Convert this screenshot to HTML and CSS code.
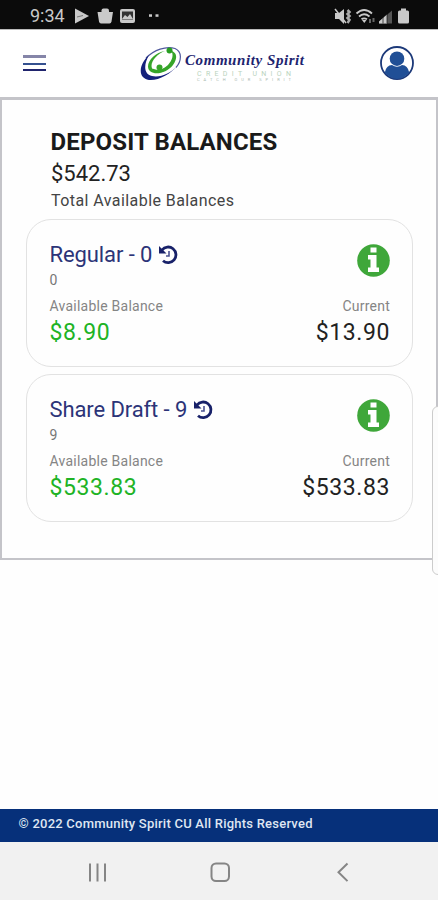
FILE: index.html
```html
<!DOCTYPE html>
<html lang="en">
<head>
<meta charset="utf-8">
<meta name="viewport" content="width=device-width, initial-scale=1">
<title>Deposit Balances</title>
<link rel="stylesheet" href="styles.css">
</head>
<body>
<div class="status">
  <span class="time">9:34</span>
  <svg class="status-left" width="90" height="20" viewBox="0 0 90 20" fill="#c9c9c9">
    <path d="M1 2.500L15 10 1 17.500z"/><path d="M3 11l6-1.500" stroke="#777" fill="none"/>
    <path d="M23.500 6h15.500l-1.500 9.500q-.4 2-2 2h-8.500q-1.600 0-2-2z"/><path d="M27.500 8V4.500Q27.500 2.500 29.500 2.500h3.500q2 0 2 2V8z"/>
    <rect x="46" y="3" width="15" height="14" rx="2"/><path d="M48 5.500h11v8H48z" fill="#333"/><path d="M48 13l3-4 2.500 2L56 8l3 5z"/>
    <rect x="75" y="8.300" width="3" height="2.500"/><rect x="81.500" y="8.300" width="3" height="2.500"/>
  </svg>
  <svg class="status-right" width="76" height="20" viewBox="0 0 76 20" fill="#c9c9c9">
    <path d="M1 7h4l5-4v15l-5-5H1z"/><path d="M1 3l11 14" stroke="#c9c9c9" stroke-width="1.500"/><path d="M13.500 4l2 2-2 2 2 2-2 2 2 2-2 3" stroke="#aaa" stroke-width="2.500" fill="none"/>
    <g fill="none" stroke="#c9c9c9" stroke-width="1.800"><path d="M22.500 7.500q7.500-7 15.500 0"/><path d="M25 10.500q5-4.500 10.500 0"/><path d="M27.500 13.300q2.500-2 5.500 0"/></g><path d="M28 14h4.500L30.300 17z"/><path d="M35 13h2v4h-2zM38.500 12h2v4h-2z" fill="#666"/>
    <path d="M45 17.500v-2l13-11v13z" fill="#555"/><path d="M45 17.500v-2l8-7v9z"/><path d="M49 11v6.500M53 8v9.500" stroke="#0b0b0b" stroke-width=".7"/>
    <path d="M64 6q0-1.500 1.500-1.500H67V2.500h5v2h1.500Q75 4.500 75 6v10q0 1.500-1.500 1.500h-8Q64 17.500 64 16z"/>
  </svg>
</div>
<header class="header">
  <div class="menu"><i></i><i></i><i></i></div>
  <svg class="logo" width="168" height="38" viewBox="0 0 168 38">
    <path d="M9 9C-1 18-3 32 9 34c9 1 22-6 28-14C31 27 20 32 12 30 3 28 4 18 9 9z" fill="#15217c"/>
    <path d="M6 12C14 4 26-.5 35 2.500c7 3 7 12 1 19" fill="none" stroke="#15217c" stroke-width="1.200" stroke-opacity=".75"/>
    <path d="M25 5C16 6 8 14 8 20.500c0 9.500 17 9 25-1.500 5-7 4-12.500-2-14.500 3 4 1.500 9.500-3 14.500-7 7-16.500 7-16.500 1 0-6 6.500-12.500 13.500-15z" fill="#36a529"/>
    <circle cx="29.500" cy="4.500" r="3" fill="#279d21"/><circle cx="19.500" cy="21.500" r="3" fill="#36a529"/>
    <path d="M12.500 24q7 3 14-1.500" fill="none" stroke="#36a529" stroke-width="2.500"/>
    <text class="brand" x="45" y="19" textLength="119" lengthAdjust="spacing">Community Spirit</text>
    <text class="union" x="57" y="29.500" textLength="94">CREDIT UNION</text>
    <text class="tagline" x="57" y="34.500" textLength="94">CATCH OUR SPIRIT</text>
  </svg>
  <svg class="profile" width="36" height="36" viewBox="0 0 36 36">
    <circle cx="18" cy="18" r="16" fill="#fff" stroke="#1c3979" stroke-width="1.800"/>
    <circle cx="18" cy="13.700" r="7.300" fill="#204f96"/>
    <path d="M5.800 27.500q1.500-7.500 7.200-7.500 5 3.500 10 0 5.700 0 7.200 7.500Q25 34 18 34T5.800 27.500z" fill="#204f96"/>
  </svg>
</header>
<main class="panel">
  <h1>DEPOSIT BALANCES</h1>
  <p class="total">$542.73</p>
  <p class="total-label">Total Available Balances</p>
  <section class="card">
    <div class="card-head">
      <div>
        <h2><span>Regular - 0</span><svg class="history" width="20" height="20" viewBox="0 0 20 20"><path d="M4 5A7.800 7.800 0 1 1 5 15.700" fill="none" stroke="#182169" stroke-width="2.800"/><path d="M1 1v7.500h7.500z" fill="#182169"/><path d="M11 6v5H8" fill="none" stroke="#4a5190" stroke-width="1.600"/></svg></h2>
        <p class="number">0</p>
      </div>
      <svg class="info" width="33" height="33" viewBox="0 0 33 33"><circle cx="16.500" cy="16.500" r="16.300" fill="#3fa73a"/><path d="M13.500 3.500h6v5h-6zM11 11h8.500v12.500H22V28H11v-4.500h2.500v-8H11z" fill="#fff"/></svg>
    </div>
    <div class="labels"><span>Available Balance</span><span>Current</span></div>
    <div class="amounts"><span class="green">$8.90</span><span>$13.90</span></div>
  </section>
  <section class="card">
    <div class="card-head">
      <div>
        <h2><span>Share Draft - 9</span><svg class="history" width="20" height="20" viewBox="0 0 20 20"><path d="M4 5A7.800 7.800 0 1 1 5 15.700" fill="none" stroke="#182169" stroke-width="2.800"/><path d="M1 1v7.500h7.500z" fill="#182169"/><path d="M11 6v5H8" fill="none" stroke="#4a5190" stroke-width="1.600"/></svg></h2>
        <p class="number">9</p>
      </div>
      <svg class="info" width="33" height="33" viewBox="0 0 33 33"><circle cx="16.500" cy="16.500" r="16.300" fill="#3fa73a"/><path d="M13.500 3.500h6v5h-6zM11 11h8.500v12.500H22V28H11v-4.500h2.500v-8H11z" fill="#fff"/></svg>
    </div>
    <div class="labels"><span>Available Balance</span><span>Current</span></div>
    <div class="amounts"><span class="green">$533.83</span><span>$533.83</span></div>
  </section>
</main>
<div class="edge-handle"></div>
<footer class="footer">© 2022 Community Spirit CU All Rights Reserved</footer>
<nav class="nav">
  <svg width="438" height="58" viewBox="0 0 438 58" fill="none" stroke="#858585" stroke-width="2">
    <path d="M90 21.500v18M97.500 21.500v18M105 21.500v18"/>
    <rect x="211.500" y="21.500" width="17.500" height="17.500" rx="4.500"/>
    <path d="M347.500 21.500l-9 8.800 9 8.800"/>
  </svg>
</nav>
</body>
</html>
```
FILE: styles.css
```css
* { box-sizing: border-box; margin: 0; padding: 0; }
body {
  width: 438px;
  height: 900px;
  overflow: hidden;
  display: flex;
  flex-direction: column;
  position: relative;
  background: #fefefe;
  font-family: Roboto, "Liberation Sans", sans-serif;
  color: #111;
}
svg { display: block; flex: none; }
.status { height: 29px; flex: none; background: #0b0b0b; display: flex; align-items: center; padding: 2px 28px 0 30px; }
.time { color: #c9c9c9; font-size: 18px; line-height: 24px; width: 44px; }
.status-right { margin-left: auto; }
.header { height: 68px; flex: none; background: #fff; border-top: 1px solid #bbb; display: flex; align-items: center; padding: 0 23px; }
.menu { width: 23px; height: 16px; display: flex; flex-direction: column; justify-content: space-between; margin-top: -1px; }
.menu i { height: 2px; background: #34508f; }
.menu i:first-child { height: 3px; background: #8585a8; }
.menu i:last-child { background: #20246d; }
.logo { margin-left: 94px; margin-top: 3px; }
.brand { font: italic bold 15px "Liberation Serif", serif; fill: #1d246f; }
.union { font: 7px Roboto, sans-serif; fill: #b9d3bd; }
.tagline { font: 4px Roboto, sans-serif; fill: #a9b7ae; }
.profile { margin: -1px 0 0 auto; }
.panel { height: 463px; flex: none; border: 2px solid #c4c4c9; border-top-width: 3px; padding: 27px 23px 0 24px; background: #fefefe; }
h1 { font-size: 24px; line-height: 30px; font-weight: 700; margin-left: 24.500px; letter-spacing: .15px; color: #1a1a1a; }
.total { font-size: 22px; line-height: 33px; margin-left: 25px; color: #222; }
.total-label { font-size: 16px; line-height: 22px; margin-left: 25px; letter-spacing: .43px; color: #444; margin-bottom: 7px; }
.card { height: 148px; border: 1.500px solid #e2e2e2; border-radius: 25px; padding: 21px 22px 0 22.500px; margin-bottom: 6.500px; }
.card-head { display: flex; justify-content: space-between; height: 52px; }
h2 { display: flex; align-items: center; gap: 6px; font-size: 22px; line-height: 28px; font-weight: 400; letter-spacing: -.1px; color: #2c3478; }
.number { font-size: 14px; line-height: 23px; color: #777; }
.info { margin-top: 3px; margin-right: .5px; }
.labels { display: flex; justify-content: space-between; font-size: 14px; line-height: 26px; color: #858585; letter-spacing: .24px; }
.amounts { display: flex; justify-content: space-between; font-size: 23px; line-height: 27px; letter-spacing: .6px; color: #222; }
.green { color: #20b325; }
.edge-handle { position: absolute; left: 432px; top: 406px; width: 14px; height: 169px; border: 1px solid #ccc; border-radius: 6px; background: #fcfcfc; }
.footer { height: 33px; flex: none; margin-top: auto; background: #06307a; color: #dfe6f2; font-size: 13px; font-weight: 500; letter-spacing: .23px; line-height: 29px; padding-left: 18.500px; }
.nav { height: 58px; flex: none; background: #f1f1f1; }
```
